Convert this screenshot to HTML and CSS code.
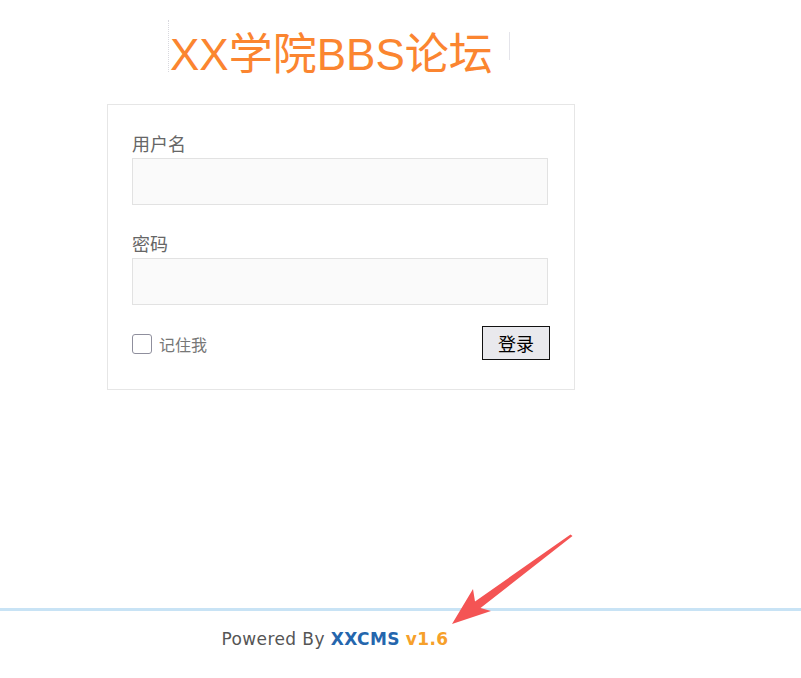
FILE: index.html
```html
<!DOCTYPE html>
<html lang="zh-CN">
<head>
<meta charset="utf-8">
<title>XX学院BBS论坛 - 登录</title>
<link rel="stylesheet" href="styles.css">
</head>
<body>
<div class="page">
  <div class="logo"><span class="logo-text">XX学院BBS论坛</span></div>
  <form class="login">
    <div class="field">
      <div class="label">用户名</div>
      <div class="input"></div>
    </div>
    <div class="field">
      <div class="label">密码</div>
      <div class="input"></div>
    </div>
    <div class="row">
      <label class="remember"><span class="check"></span><span class="remember-text">记住我</span></label>
      <button type="button" class="btn">登录</button>
    </div>
  </form>
</div>
<footer class="footer">
  <div class="footer-inner">Powered By <b class="brand">XXCMS</b> <b class="ver">v1.6</b></div>
</footer>
<svg class="arrow" width="801" height="678" viewBox="0 0 801 678">
  <polygon fill="#f45454" points="452,624 491,611 480.5,608 572.5,536 570.5,534.5 475,601.5 473,589"/>
</svg>
</body>
</html>
```
FILE: styles.css
```css
html, body {
  margin: 0;
  padding: 0;
  background: #fff;
}
body {
  font-family: "Noto Sans CJK SC", "Liberation Sans", sans-serif;
  position: relative;
  min-height: 678px;
}
.page {
  width: 468px;
  margin-left: 107px;
  padding-top: 18px;
}
.logo {
  margin-left: 61px;
  width: 342px;
  height: 62px;
  box-sizing: border-box;
  display: flex;
  align-items: flex-start;
  padding: 13px 0 0 2px;
  position: relative;
}
.logo::before {
  content: "";
  position: absolute;
  left: 0;
  top: 2px;
  height: 52px;
  border-left: 1px dotted #d8d8de;
}
.logo::after {
  content: "";
  position: absolute;
  right: 0;
  top: 14px;
  height: 28px;
  border-left: 1px solid #e4e4ea;
}
.logo-text {
  font-family: "Liberation Sans", "Noto Sans CJK SC", sans-serif;
  font-size: 44px;
  line-height: 48px;
  color: #fb8530;
  white-space: nowrap;
}
.login {
  margin: 24px 0 0 0;
  border: 1px solid #e6e6e6;
  padding: 26px 26px 29px 24px;
}
.field + .field {
  margin-top: 26px;
}
.label {
  font-size: 18px;
  line-height: 24px;
  color: #666;
  margin-bottom: 3px;
}
.input {
  height: 47px;
  box-sizing: border-box;
  border: 1px solid #e2e2e2;
  background: #fafafa;
}
.row {
  margin-top: 21px;
  display: flex;
  justify-content: space-between;
  align-items: center;
  height: 34px;
}
.remember {
  display: flex;
  align-items: center;
  margin-top: 2px;
}
.check {
  width: 20px;
  height: 20px;
  box-sizing: border-box;
  border: 1px solid #8f8f9d;
  border-radius: 3px;
  background: #fff;
}
.remember-text {
  margin-left: 7px;
  font-size: 16px;
  line-height: 20px;
  color: #777;
}
.btn {
  width: 68px;
  height: 34px;
  margin-right: -2px;
  box-sizing: border-box;
  border: 1px solid #111;
  background: #e9e9ed;
  font-family: "Noto Sans CJK SC", sans-serif;
  font-size: 18px;
  line-height: 24px;
  color: #000;
  padding: 0;
}
.footer {
  margin-top: 218px;
  border-top: 3px solid #c8e3f5;
}
.footer-inner {
  width: 468px;
  margin-left: 101px;
  text-align: center;
  padding-top: 18px;
  font-family: "DejaVu Sans", Verdana, sans-serif;
  font-size: 17px;
  line-height: 20px;
  letter-spacing: 0.4px;
  color: #555;
}
.brand {
  color: #2566ad;
}
.ver {
  color: #f6a02a;
}
.arrow {
  position: absolute;
  left: 0;
  top: 0;
  pointer-events: none;
}
```
